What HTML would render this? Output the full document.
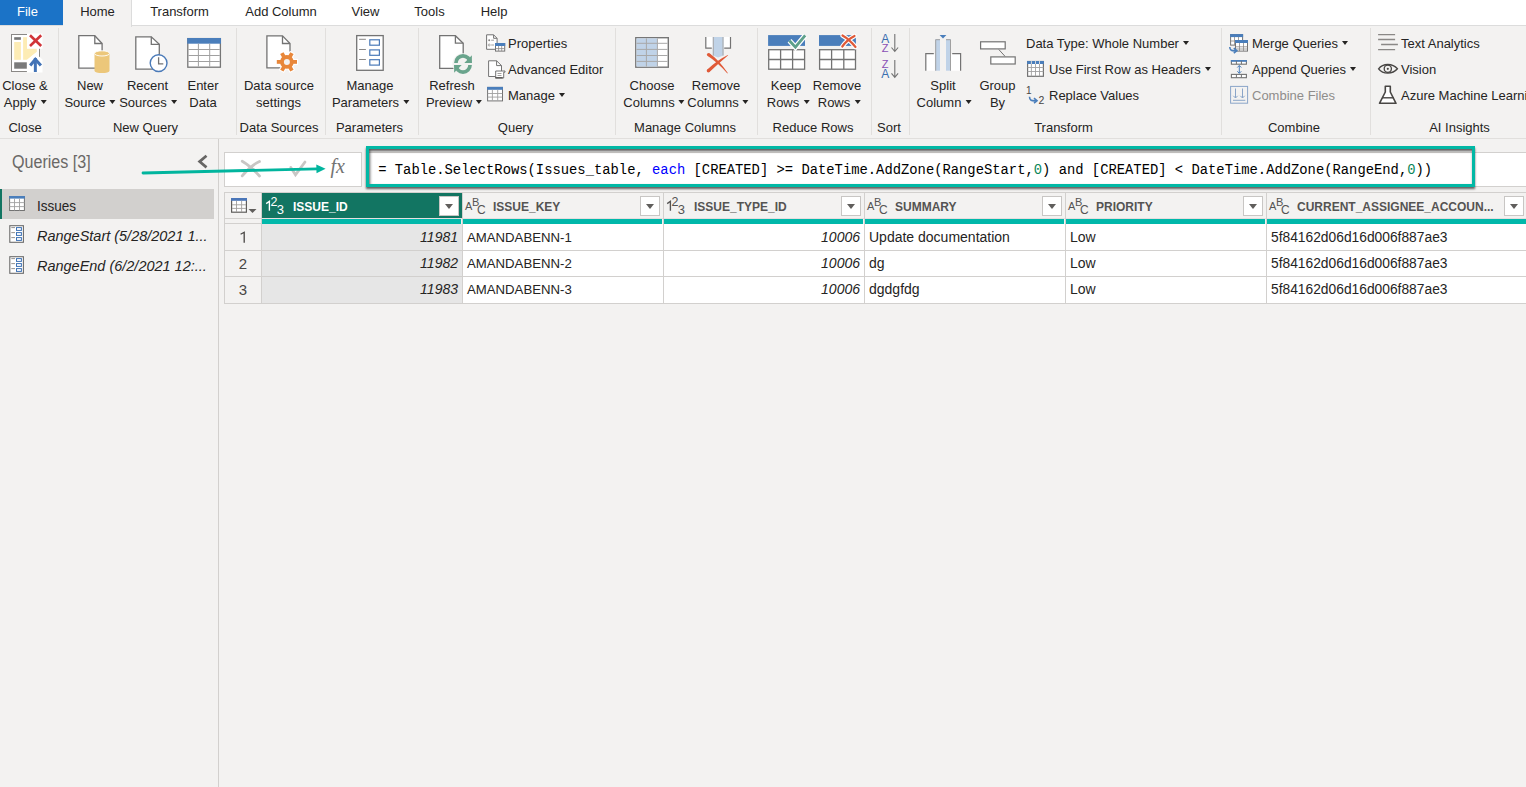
<!DOCTYPE html>
<html><head><meta charset="utf-8">
<style>
*{margin:0;padding:0;box-sizing:border-box}
html,body{width:1526px;height:787px;overflow:hidden;background:#f3f2f1;font-family:"Liberation Sans",sans-serif;color:#252423;position:relative}
.a{position:absolute}
.t{position:absolute;white-space:nowrap;font-size:13px;line-height:17px;color:#252423}
.c{transform:translateX(-50%)}
.dd{display:inline-block;width:0;height:0;border-left:3.5px solid transparent;border-right:3.5px solid transparent;border-top:4px solid #252423;vertical-align:middle;margin-left:4px;position:relative;top:-2px}
svg{position:absolute;overflow:visible}
</style></head><body>
<!-- tab bar -->
<div class="a" style="left:0;top:0;width:1526px;height:26px;background:#fff;border-bottom:1px solid #dcdcdc"></div>
<div class="a" style="left:0;top:0;width:63px;height:25px;background:#1b73c7"></div>
<div class="a" style="left:63px;top:0;width:69px;height:27px;background:#f3f2f1;border-right:1px solid #dcdcdc"></div>
<div class="t c" style="left:27.5px;top:3px;color:#fff">File</div>
<div class="t c" style="left:97.5px;top:3px">Home</div>
<div class="t c" style="left:179.5px;top:3px">Transform</div>
<div class="t c" style="left:281px;top:3px">Add Column</div>
<div class="t c" style="left:365.5px;top:3px">View</div>
<div class="t c" style="left:429.5px;top:3px">Tools</div>
<div class="t c" style="left:494px;top:3px">Help</div>

<!-- ribbon -->
<div class="a" style="left:0;top:138px;width:1526px;height:1px;background:#e1dfdd"></div>
<div class="a" style="left:58px;top:28px;width:1px;height:107px;background:#e1dfdd"></div>
<div class="a" style="left:236px;top:28px;width:1px;height:107px;background:#e1dfdd"></div>
<div class="a" style="left:325px;top:28px;width:1px;height:107px;background:#e1dfdd"></div>
<div class="a" style="left:418px;top:28px;width:1px;height:107px;background:#e1dfdd"></div>
<div class="a" style="left:615px;top:28px;width:1px;height:107px;background:#e1dfdd"></div>
<div class="a" style="left:757px;top:28px;width:1px;height:107px;background:#e1dfdd"></div>
<div class="a" style="left:871px;top:28px;width:1px;height:107px;background:#e1dfdd"></div>
<div class="a" style="left:909px;top:28px;width:1px;height:107px;background:#e1dfdd"></div>
<div class="a" style="left:1221px;top:28px;width:1px;height:107px;background:#e1dfdd"></div>
<div class="a" style="left:1370px;top:28px;width:1px;height:107px;background:#e1dfdd"></div>

<!-- group labels -->
<div class="t c" style="left:25px;top:119px">Close</div>
<div class="t c" style="left:145.5px;top:119px">New Query</div>
<div class="t c" style="left:279px;top:119px">Data Sources</div>
<div class="t c" style="left:369.5px;top:119px">Parameters</div>
<div class="t c" style="left:515.5px;top:119px">Query</div>
<div class="t c" style="left:685px;top:119px">Manage Columns</div>
<div class="t c" style="left:813px;top:119px">Reduce Rows</div>
<div class="t c" style="left:889px;top:119px">Sort</div>
<div class="t c" style="left:1063.5px;top:119px">Transform</div>
<div class="t c" style="left:1294px;top:119px">Combine</div>
<div class="t c" style="left:1459.5px;top:119px">AI Insights</div>

<!-- big button labels -->
<div class="t c" style="left:25px;top:77px">Close &amp;</div>
<div class="t c" style="left:25px;top:94px">Apply<span class="dd"></span></div>
<div class="t c" style="left:90px;top:77px">New</div>
<div class="t c" style="left:90px;top:94px">Source<span class="dd"></span></div>
<div class="t c" style="left:147.5px;top:77px">Recent</div>
<div class="t c" style="left:148px;top:94px">Sources<span class="dd"></span></div>
<div class="t c" style="left:203px;top:77px">Enter</div>
<div class="t c" style="left:203px;top:94px">Data</div>
<div class="t c" style="left:279px;top:77px">Data source</div>
<div class="t c" style="left:278.5px;top:94px">settings</div>
<div class="t c" style="left:370px;top:77px">Manage</div>
<div class="t c" style="left:370.5px;top:94px">Parameters<span class="dd"></span></div>
<div class="t c" style="left:452px;top:77px">Refresh</div>
<div class="t c" style="left:454px;top:94px">Preview<span class="dd"></span></div>
<div class="t c" style="left:652px;top:77px">Choose</div>
<div class="t c" style="left:654px;top:94px">Columns<span class="dd"></span></div>
<div class="t c" style="left:716px;top:77px">Remove</div>
<div class="t c" style="left:718px;top:94px">Columns<span class="dd"></span></div>
<div class="t c" style="left:786px;top:77px">Keep</div>
<div class="t c" style="left:788px;top:94px">Rows<span class="dd"></span></div>
<div class="t c" style="left:837px;top:77px">Remove</div>
<div class="t c" style="left:839px;top:94px">Rows<span class="dd"></span></div>
<div class="t c" style="left:943px;top:77px">Split</div>
<div class="t c" style="left:944px;top:94px">Column<span class="dd"></span></div>
<div class="t c" style="left:997.5px;top:77px">Group</div>
<div class="t c" style="left:997.5px;top:94px">By</div>

<!-- small button labels -->
<div class="t" style="left:508px;top:35px">Properties</div>
<div class="t" style="left:508px;top:61px">Advanced Editor</div>
<div class="t" style="left:508px;top:87px">Manage<span class="dd"></span></div>
<div class="t" style="left:1026px;top:35px">Data Type: Whole Number<span class="dd"></span></div>
<div class="t" style="left:1049px;top:61px">Use First Row as Headers<span class="dd"></span></div>
<div class="t" style="left:1049px;top:87px">Replace Values</div>
<div class="t" style="left:1252px;top:35px">Merge Queries<span class="dd"></span></div>
<div class="t" style="left:1252px;top:61px">Append Queries<span class="dd"></span></div>
<div class="t" style="left:1252px;top:87px;color:#8f8d8b">Combine Files</div>
<div class="t" style="left:1401px;top:35px">Text Analytics</div>
<div class="t" style="left:1401px;top:61px">Vision</div>
<div class="t" style="left:1401px;top:87px">Azure Machine Learning</div>

<!-- ICONS -->


<!-- left panel -->
<div class="a" style="left:218px;top:139px;width:1px;height:648px;background:#d2d0ce"></div>
<div class="t" style="left:12px;top:152px;font-size:17.5px;line-height:20px;color:#6a6866;transform:scaleX(0.92);transform-origin:0 0">Queries [3]</div>
<div class="a" style="left:0;top:189px;width:214px;height:30px;background:#d2d0ce"></div>
<div class="a" style="left:0;top:189px;width:2px;height:30px;background:#127562"></div>
<div class="t" style="left:37px;top:197px;font-size:15px;line-height:17px;transform:scaleX(0.9);transform-origin:0 0">Issues</div>
<div class="t" style="left:37px;top:226.5px;font-size:15px;line-height:17px;font-style:italic;transform:scaleX(0.965);transform-origin:0 0">RangeStart (5/28/2021 1...</div>
<div class="t" style="left:37px;top:256.5px;font-size:15px;line-height:17px;font-style:italic;transform:scaleX(0.965);transform-origin:0 0">RangeEnd (6/2/2021 12:...</div>

<!-- formula bar -->
<div class="a" style="left:224px;top:152px;width:138px;height:35px;background:#fff;border:1px solid #d2d0ce"></div>
<div class="a" style="left:366px;top:152px;width:1160px;height:35px;background:#fff;border-top:1px solid #d2d0ce;border-bottom:1px solid #d2d0ce"></div>
<div class="a" style="left:366px;top:146px;width:1109px;height:41px;border:3px solid #01b8a5;box-shadow:0 2px 2px rgba(0,0,0,.6), inset 1px 2px 3px rgba(0,0,0,.65)"></div>
<div class="t" style="left:378.2px;top:162px;font-family:'Liberation Mono',monospace;font-size:13.83px;line-height:17px;color:#000">= Table.SelectRows(Issues_table, <span style="color:#0000ff">each</span> [CREATED] &gt;= DateTime.AddZone(RangeStart,<span style="color:#098658">0</span>) and [CREATED] &lt; DateTime.AddZone(RangeEnd,<span style="color:#098658">0</span>))</div>

<!-- table -->
<div id="table">
<div class="a" style="left:224px;top:192px;width:1302px;height:111px;background:#fff"></div>
<div class="a" style="left:224px;top:192px;width:1302px;height:32px;background:#f3f2f1"></div>
<div class="a" style="left:224px;top:192px;width:38px;height:112px;background:#f3f2f1"></div>
<div class="a" style="left:262px;top:224px;width:200px;height:79px;background:#e6e6e6"></div>
<div class="a" style="left:224px;top:192px;width:1302px;height:1px;background:#d2d0ce"></div>
<div class="a" style="left:224px;top:218px;width:1302px;height:1px;background:#e6dfdf"></div>
<div class="a" style="left:224px;top:218px;width:38px;height:1px;background:#d2d0ce"></div>
<div class="a" style="left:224px;top:223px;width:38px;height:1px;background:#d2d0ce"></div>
<div class="a" style="left:262px;top:193px;width:200px;height:25px;background:#127562"></div>
<div class="a" style="left:262px;top:219px;width:199px;height:5px;background:#01b8aa"></div>
<div class="a" style="left:463px;top:219px;width:199px;height:5px;background:#01b8aa"></div>
<div class="a" style="left:664px;top:219px;width:199px;height:5px;background:#01b8aa"></div>
<div class="a" style="left:865px;top:219px;width:199px;height:5px;background:#01b8aa"></div>
<div class="a" style="left:1066px;top:219px;width:199px;height:5px;background:#01b8aa"></div>
<div class="a" style="left:1267px;top:219px;width:259px;height:5px;background:#01b8aa"></div>
<div class="a" style="left:224px;top:250px;width:1302px;height:1px;background:#d2d0ce"></div>
<div class="a" style="left:224px;top:276px;width:1302px;height:1px;background:#d2d0ce"></div>
<div class="a" style="left:224px;top:303px;width:1302px;height:1px;background:#d2d0ce"></div>
<div class="a" style="left:224px;top:192px;width:1px;height:112px;background:#d2d0ce"></div>
<div class="a" style="left:261px;top:192px;width:1px;height:112px;background:#d2d0ce"></div>
<div class="a" style="left:462px;top:192px;width:1px;height:112px;background:#d2d0ce"></div>
<div class="a" style="left:663px;top:192px;width:1px;height:112px;background:#d2d0ce"></div>
<div class="a" style="left:864px;top:192px;width:1px;height:112px;background:#d2d0ce"></div>
<div class="a" style="left:1065px;top:192px;width:1px;height:112px;background:#d2d0ce"></div>
<div class="a" style="left:1266px;top:192px;width:1px;height:112px;background:#d2d0ce"></div>
<div class="a" style="left:439px;top:196px;width:20px;height:20px;background:#fff;border:1px solid #c8c6c4"><div class="a" style="left:5px;top:7px;width:0;height:0;border-left:4.5px solid transparent;border-right:4.5px solid transparent;border-top:5px solid #605e5c"></div></div>
<div class="a" style="left:640px;top:196px;width:20px;height:20px;background:#fff;border:1px solid #c8c6c4"><div class="a" style="left:5px;top:7px;width:0;height:0;border-left:4.5px solid transparent;border-right:4.5px solid transparent;border-top:5px solid #605e5c"></div></div>
<div class="a" style="left:841px;top:196px;width:20px;height:20px;background:#fff;border:1px solid #c8c6c4"><div class="a" style="left:5px;top:7px;width:0;height:0;border-left:4.5px solid transparent;border-right:4.5px solid transparent;border-top:5px solid #605e5c"></div></div>
<div class="a" style="left:1042px;top:196px;width:20px;height:20px;background:#fff;border:1px solid #c8c6c4"><div class="a" style="left:5px;top:7px;width:0;height:0;border-left:4.5px solid transparent;border-right:4.5px solid transparent;border-top:5px solid #605e5c"></div></div>
<div class="a" style="left:1243px;top:196px;width:20px;height:20px;background:#fff;border:1px solid #c8c6c4"><div class="a" style="left:5px;top:7px;width:0;height:0;border-left:4.5px solid transparent;border-right:4.5px solid transparent;border-top:5px solid #605e5c"></div></div>
<div class="a" style="left:1504px;top:196px;width:20px;height:20px;background:#fff;border:1px solid #c8c6c4"><div class="a" style="left:5px;top:7px;width:0;height:0;border-left:4.5px solid transparent;border-right:4.5px solid transparent;border-top:5px solid #605e5c"></div></div>
<svg style="left:262px;top:194px" width="24" height="24" viewBox="0 0 24 24"><path d="M4.2 9.6L7.4 7.3V16.8" stroke="#fff" stroke-width="1.35" fill="none"/></svg>
<div class="a" style="left:262px;top:194px;width:24px;height:24px;color:#fff;font-size:0"><span class="a" style="left:8.6px;top:0.6px;font-size:12.5px;line-height:14px">2</span><span class="a" style="left:14.8px;top:7.5px;font-size:13px;line-height:15px">3</span></div>
<div class="t" style="left:293px;top:199px;font-size:12px;font-weight:bold;color:#fff">ISSUE_ID</div>
<div class="a" style="left:465px;top:196px;width:20px;height:20px;color:#555453;font-size:0"><span class="a" style="left:0;top:4px;font-size:11px;line-height:13px">A</span><span class="a" style="left:7px;top:0px;font-size:11px;line-height:13px">B</span><span class="a" style="left:12px;top:7px;font-size:12px;line-height:14px">C</span></div>
<div class="t" style="left:493px;top:199px;font-size:12px;font-weight:bold;color:#555453">ISSUE_KEY</div>
<svg style="left:663px;top:194px" width="24" height="24" viewBox="0 0 24 24"><path d="M4.2 9.6L7.4 7.3V16.8" stroke="#555453" stroke-width="1.35" fill="none"/></svg>
<div class="a" style="left:663px;top:194px;width:24px;height:24px;color:#555453;font-size:0"><span class="a" style="left:8.6px;top:0.6px;font-size:12.5px;line-height:14px">2</span><span class="a" style="left:14.8px;top:7.5px;font-size:13px;line-height:15px">3</span></div>
<div class="t" style="left:694px;top:199px;font-size:12px;font-weight:bold;color:#555453">ISSUE_TYPE_ID</div>
<div class="a" style="left:867px;top:196px;width:20px;height:20px;color:#555453;font-size:0"><span class="a" style="left:0;top:4px;font-size:11px;line-height:13px">A</span><span class="a" style="left:7px;top:0px;font-size:11px;line-height:13px">B</span><span class="a" style="left:12px;top:7px;font-size:12px;line-height:14px">C</span></div>
<div class="t" style="left:895px;top:199px;font-size:12px;font-weight:bold;color:#555453">SUMMARY</div>
<div class="a" style="left:1068px;top:196px;width:20px;height:20px;color:#555453;font-size:0"><span class="a" style="left:0;top:4px;font-size:11px;line-height:13px">A</span><span class="a" style="left:7px;top:0px;font-size:11px;line-height:13px">B</span><span class="a" style="left:12px;top:7px;font-size:12px;line-height:14px">C</span></div>
<div class="t" style="left:1096px;top:199px;font-size:12px;font-weight:bold;color:#555453">PRIORITY</div>
<div class="a" style="left:1269px;top:196px;width:20px;height:20px;color:#555453;font-size:0"><span class="a" style="left:0;top:4px;font-size:11px;line-height:13px">A</span><span class="a" style="left:7px;top:0px;font-size:11px;line-height:13px">B</span><span class="a" style="left:12px;top:7px;font-size:12px;line-height:14px">C</span></div>
<div class="t" style="left:1297px;top:199px;font-size:12px;font-weight:bold;color:#555453">CURRENT_ASSIGNEE_ACCOUN...</div>
<svg style="left:236px;top:228px" width="14" height="18" viewBox="0 0 14 18"><path d="M4.6 6.2L8.2 4.3V14.7" stroke="#484644" stroke-width="1.3" fill="none"/></svg>
<div class="t" style="right:1068px;top:229px;font-size:14px;font-style:italic">11981</div>
<div class="t" style="left:467px;top:229px;font-size:13.2px">AMANDABENN-1</div>
<div class="t" style="right:666px;top:229px;font-size:14px;font-style:italic">10006</div>
<div class="t" style="left:869px;top:229px;font-size:14px">Update documentation</div>
<div class="t" style="left:1070px;top:229px;font-size:14px">Low</div>
<div class="t" style="left:1271px;top:229px;font-size:13.8px">5f84162d06d16d006f887ae3</div>
<div class="t c" style="left:243px;top:255px;font-size:15px;line-height:18px;color:#484644">2</div>
<div class="t" style="right:1068px;top:255px;font-size:14px;font-style:italic">11982</div>
<div class="t" style="left:467px;top:255px;font-size:13.2px">AMANDABENN-2</div>
<div class="t" style="right:666px;top:255px;font-size:14px;font-style:italic">10006</div>
<div class="t" style="left:869px;top:255px;font-size:14px">dg</div>
<div class="t" style="left:1070px;top:255px;font-size:14px">Low</div>
<div class="t" style="left:1271px;top:255px;font-size:13.8px">5f84162d06d16d006f887ae3</div>
<div class="t c" style="left:243px;top:281px;font-size:15px;line-height:18px;color:#484644">3</div>
<div class="t" style="right:1068px;top:281px;font-size:14px;font-style:italic">11983</div>
<div class="t" style="left:467px;top:281px;font-size:13.2px">AMANDABENN-3</div>
<div class="t" style="right:666px;top:281px;font-size:14px;font-style:italic">10006</div>
<div class="t" style="left:869px;top:281px;font-size:14px">dgdgfdg</div>
<div class="t" style="left:1070px;top:281px;font-size:14px">Low</div>
<div class="t" style="left:1271px;top:281px;font-size:13.8px">5f84162d06d16d006f887ae3</div>
<svg style="left:231px;top:198px" width="26" height="15" viewBox="0 0 26 15">
<rect x="0.6" y="0.6" width="14.8" height="13.6" fill="#fff" stroke="#605e5c" stroke-width="1.2"/>
<rect x="0" y="0" width="16" height="2.8" fill="#4a76b8"/>
<path d="M5.5 2.8V14M10.6 2.8V14M1 6.8H15M1 10.4H15" stroke="#a19f9d" stroke-width="0.9" fill="none"/>
<path d="M17.5 11h8l-4 4z" fill="#605e5c"/></svg>
</div>
<!--endtable-->

<div id="icons"><svg style="left:0;top:0" width="1526" height="787" viewBox="0 0 1526 787">
<!-- Close & Apply -->
<g>
<rect x="11.5" y="34.5" width="28" height="37" fill="#fff" stroke="#8a8886" stroke-width="1"/>
<rect x="14.2" y="37.2" width="6.7" height="2.6" fill="#767676"/>
<rect x="14.2" y="42" width="6.7" height="17.8" fill="#fdecb5"/>
<path d="M23.1 37.2H36.8V51.8L26.9 59.8H23.1Z" fill="#fdecb5"/>
<rect x="14.2" y="62.3" width="12.7" height="6.4" fill="#7a7a7a"/>
<path d="M27 33.5H42.5V48.8H27Z" fill="#fff"/>
<path d="M26.9 60.5L35.35 53.2L42.5 59.5V72.5H26.9Z" fill="#fff"/>
<path d="M30 35.2L41.2 46M41.2 35.2L30 46" stroke="#d13438" stroke-width="2.6"/>

<path d="M35.35 58V72" stroke="#4373b6" stroke-width="3"/>
<path d="M30.2 65.5L35.35 59.2L40.9 65.5" stroke="#4373b6" stroke-width="3" fill="none"/>
</g>
<!-- New Source -->
<g stroke="#737373" stroke-width="1.3" fill="#fff">
<path d="M78.8 35.7H94.8L102.1 43.5V68.1H78.8Z"/>
<path d="M94.8 35.7V43.5H102.1" fill="none"/>
</g>
<g>
<path d="M94.5 53.4V70.8A7.5 2.3 0 0 0 109.5 70.8V53.4Z" fill="#ecc77a"/>
<ellipse cx="102" cy="53.4" rx="7.5" ry="2.6" fill="#ecc77a" stroke="#fff" stroke-width="0.9"/>
</g>
<!-- Recent Sources -->
<g stroke="#737373" stroke-width="1.3" fill="#fff">
<path d="M135.8 36.8H151.3L159.3 44.3V69.1H135.8Z"/>
<path d="M151.3 36.8V44.3H159.3" fill="none"/>
</g>
<circle cx="158.6" cy="63.1" r="8.4" fill="#fff" stroke="#4a7ab8" stroke-width="1.4"/>
<path d="M158.6 57.3V63.8H163.3" stroke="#737373" stroke-width="1.3" fill="none"/>
<!-- Enter Data -->
<rect x="187.8" y="38.6" width="32.6" height="28.6" fill="#fff" stroke="#767676" stroke-width="1.3"/>
<rect x="187.2" y="38" width="33.8" height="5.7" fill="#4a7ebb"/>
<path d="M198.4 43.7V66.6M209.7 43.7V66.6M188.4 49.5H219.8M188.4 55.5H219.8M188.4 61.5H219.8" stroke="#a0a0a0" stroke-width="1"/>
<!-- Data source settings -->
<g stroke="#737373" stroke-width="1.3" fill="#fff">
<path d="M266.9 35.9H282.5L290 43.5V67.8H266.9Z"/>
<path d="M282.5 35.9V43.5H290" fill="none"/>
</g>
<g transform="translate(286.9 61.9)">
<g fill="#fff" stroke="#fff" stroke-width="2.2"><circle r="6.8"/><rect x="4.5" y="-1.9" width="5.6" height="3.8"/><rect x="4.5" y="-1.9" width="5.6" height="3.8" transform="rotate(60)"/><rect x="4.5" y="-1.9" width="5.6" height="3.8" transform="rotate(120)"/><rect x="4.5" y="-1.9" width="5.6" height="3.8" transform="rotate(180)"/><rect x="4.5" y="-1.9" width="5.6" height="3.8" transform="rotate(240)"/><rect x="4.5" y="-1.9" width="5.6" height="3.8" transform="rotate(300)"/></g>
<g fill="#e8873a"><circle r="6.8"/><rect x="4.5" y="-1.9" width="5.6" height="3.8"/><rect x="4.5" y="-1.9" width="5.6" height="3.8" transform="rotate(60)"/><rect x="4.5" y="-1.9" width="5.6" height="3.8" transform="rotate(120)"/><rect x="4.5" y="-1.9" width="5.6" height="3.8" transform="rotate(180)"/><rect x="4.5" y="-1.9" width="5.6" height="3.8" transform="rotate(240)"/><rect x="4.5" y="-1.9" width="5.6" height="3.8" transform="rotate(300)"/></g>
<circle r="3" fill="#f3f2f1"/>
</g>
<!-- Manage Parameters -->
<rect x="356.7" y="35.6" width="26.5" height="34.7" fill="#fff" stroke="#737373" stroke-width="1.3"/>
<path d="M359.1 39.3H365.9M359.1 49.5H365.9M359.1 59.5H365.9" stroke="#8a8886" stroke-width="1"/>
<rect x="369.8" y="39.8" width="9.6" height="5.4" fill="none" stroke="#4a7ab8" stroke-width="1.2"/>
<rect x="369.8" y="49.9" width="9.6" height="5.4" fill="none" stroke="#4a7ab8" stroke-width="1.2"/>
<rect x="369.8" y="59.7" width="9.6" height="5.4" fill="none" stroke="#4a7ab8" stroke-width="1.2"/>
<!-- Refresh Preview -->
<g stroke="#737373" stroke-width="1.3" fill="#fff">
<path d="M439.7 35.7H455.4L463.2 43.2V68.3H439.7Z"/>
<path d="M455.4 35.7V43.2H463.2" fill="none"/>
</g>
<circle cx="463" cy="63.9" r="10.6" fill="#f3f2f1"/>
<path d="M454.1 62.9A8.9 8.9 0 0 1 471.9 62.9H468.2A5.2 5.2 0 0 0 457.8 62.9Z" fill="#69a48c"/>
<path d="M471.9 65A8.9 8.9 0 0 1 454.1 65H457.8A5.2 5.2 0 0 0 468.2 65Z" fill="#69a48c"/>
<path d="M464.3 62.9H471.9V55.2Z" fill="#69a48c"/>
<path d="M461.7 65H454.1V72.7Z" fill="#69a48c"/>
<!-- Properties -->
<g stroke="#737373" stroke-width="1" fill="#fff">
<path d="M486.6 34.8H493.6L497.1 38.3V49.3H486.6Z"/><path d="M493.6 34.8V38.3H497.1" fill="none"/>
</g>
<circle cx="489.2" cy="40.2" r="1" fill="#8a8886"/><path d="M491.2 40.2H494" stroke="#8a8886" stroke-width="0.8"/>
<circle cx="489.2" cy="45" r="1" fill="none" stroke="#8a8886" stroke-width="0.7"/><path d="M491.2 45H494" stroke="#8a8886" stroke-width="0.8"/>
<rect x="495.5" y="43.5" width="9.2" height="7.6" fill="#fff" stroke="#737373" stroke-width="1"/>
<rect x="495" y="43" width="10.2" height="3" fill="#4a7ebb"/>
<path d="M498.6 46V51M501.7 46V51M495.5 48.6H504.7" stroke="#8a8886" stroke-width="0.8"/>
<!-- Advanced Editor -->
<g stroke="#737373" stroke-width="1" fill="#fff">
<path d="M488.6 60.8H496.6L501.5 65.6V76.5H488.6Z"/><path d="M496.6 60.8V65.6H501.5" fill="none"/>
</g>
<path d="M495.7 71H505V72.2H503.7V78H495.7Z" fill="#fff" stroke="#737373" stroke-width="1"/>
<path d="M497.5 73.5H501.5M497.5 75.5H501.5" stroke="#8a8886" stroke-width="0.8"/>
<rect x="495.2" y="77" width="7.5" height="1.5" fill="#605e5c"/>
<!-- Manage table -->
<rect x="487.6" y="87.4" width="14.9" height="13.5" fill="#fff" stroke="#737373" stroke-width="1"/>
<rect x="487.1" y="86.9" width="15.9" height="2.9" fill="#4a7ebb"/>
<path d="M492.4 89.8V100.6M497.7 89.8V100.6M487.8 93.5H502.3M487.8 97.1H502.3" stroke="#a0a0a0" stroke-width="0.9"/>
<!-- Choose Columns -->
<rect x="635.8" y="37.7" width="32.5" height="29.5" fill="#fff" stroke="#767676" stroke-width="1.4"/>
<rect x="636.5" y="38.4" width="20.9" height="28.1" fill="#c0d3e8"/>
<path d="M646.4 38.4V66.5M657.4 38.4V66.5M636.5 43.3H667.6M636.5 49.4H667.6M636.5 55.5H667.6M636.5 61.4H667.6" stroke="#a8a8a8" stroke-width="1"/>
<!-- Remove Columns -->
<rect x="705.8" y="37" width="25" height="11.1" fill="#fff"/>
<path d="M705.8 37V48.1H711.8M724.2 48.1H730.5V37" fill="none" stroke="#737373" stroke-width="1.2"/>
<path d="M712.8 37V55.4L718.1 57.5L723.5 55.4V37Z" fill="#c0d3e8"/>
<path d="M713.3 37V55.5M723 37V55.5" stroke="#a8a8a8" stroke-width="1"/>
<g fill="#e05a38">
<path d="M707.4 55.8Q716.5 61.5 727.4 73.4L727.8 73Q719 60 709.8 53.4Z"/><circle cx="708.6" cy="54.6" r="1.7"/>
<path d="M727.8 54.9Q716.5 60.5 707.3 69.5L709.5 72.1Q718.5 63.5 728.2 55.3Z"/><circle cx="708.4" cy="70.8" r="1.7"/>
</g>
<!-- Keep Rows -->
<rect x="768.1" y="35.1" width="36.9" height="10.8" fill="#4a7ebb"/>
<rect x="768.7" y="49.7" width="35.9" height="19.5" fill="#fff" stroke="#737373" stroke-width="1.3"/>
<path d="M780.6 49.7V69.2M792.6 49.7V69.2M768.7 59.5H804.6" stroke="#737373" stroke-width="1.3"/>
<path d="M789.5 40.8L795.4 47.2L805.2 35.3" stroke="#fff" stroke-width="5.2" fill="none"/>
<path d="M789.5 40.8L795.4 47.2L805.2 35.3" stroke="#5ea08a" stroke-width="2.8" fill="none"/>
<!-- Remove Rows -->
<rect x="819" y="35.1" width="36.9" height="10.8" fill="#4a7ebb"/>
<rect x="819.6" y="49.7" width="35.9" height="19.5" fill="#fff" stroke="#737373" stroke-width="1.3"/>
<path d="M831.6 49.7V69.2M843.8 49.7V69.2M819.6 59.5H855.5" stroke="#737373" stroke-width="1.3"/>
<path d="M842.5 35.5C847 38 851 41.5 855.5 47M854.5 36C849.5 38.5 845.5 42 842.3 46.5" stroke="#fff" stroke-width="4.5" fill="none" stroke-linecap="round"/>
<path d="M842.5 35.5C847 38 851 41.5 855.5 47M854.5 36C849.5 38.5 845.5 42 842.3 46.5" stroke="#e05a38" stroke-width="2.2" fill="none" stroke-linecap="round"/>
<!-- Sort -->
<g font-family="Liberation Sans" font-size="11.5">
<text x="881.3" y="42.8" fill="#3a6fb0" font-size="12">A</text>
<text x="881.8" y="52.2" fill="#8a4fb5" font-size="11">Z</text>
<text x="881.8" y="67.9" fill="#8a4fb5" font-size="11">Z</text>
<text x="881.3" y="77.8" fill="#3a6fb0" font-size="12">A</text>
</g>
<path d="M894.8 34.1V51.5M891.5 47.5L894.8 51.5L898.1 47.5M894.8 60V77.3M891.5 73.3L894.8 77.3L898.1 73.3" stroke="#737373" stroke-width="1.1" fill="none"/>
<!-- Split Column -->
<rect x="926.2" y="54" width="8.6" height="16.7" fill="#fff"/>
<rect x="951" y="54" width="9.2" height="16.7" fill="#fff"/>
<path d="M925.8 70.7V53.7H933.8M952.2 53.7H960.6V70.7" stroke="#737373" stroke-width="1.2" fill="none"/>
<rect x="935.2" y="39.2" width="4.8" height="31.5" fill="#c0d3e8"/>
<rect x="946" y="39.2" width="5" height="31.5" fill="#c0d3e8"/>
<path d="M935.7 70.7V39.7H940M946 39.7H950.5V70.7" stroke="#a0a0a0" stroke-width="1" fill="none"/>
<path d="M939.6 35H946.4L943 38.4Z" fill="#4a7ebb"/>
<!-- Group By -->
<rect x="980.6" y="41.8" width="24.6" height="7.1" fill="#fff" stroke="#737373" stroke-width="1.2"/>
<rect x="990.8" y="56.9" width="24.4" height="7.1" fill="#fff" stroke="#737373" stroke-width="1.2"/>
<path d="M998.8 49.5L1005 56.3" stroke="#737373" stroke-width="1"/>
<!-- Use First Row -->
<rect x="1027.6" y="61.5" width="15.8" height="14.8" fill="#fff" stroke="#737373" stroke-width="1.2"/>
<rect x="1027.1" y="61" width="16.8" height="3" fill="#4a7ebb"/>
<path d="M1031.4 61.5V76.3M1035.5 61.5V76.3M1039.5 61.5V76.3M1027.6 67.5H1043.4M1027.6 71.5H1043.4" stroke="#a0a0a0" stroke-width="0.9"/>
<path d="M1031.4 61V64M1035.5 61V64M1039.5 61V64" stroke="#fff" stroke-width="0.6"/>
<!-- Replace Values -->
<text x="1026" y="93.7" font-family="Liberation Sans" font-size="10" fill="#484644">1</text>
<text x="1038.6" y="103.5" font-family="Liberation Sans" font-size="10.5" fill="#484644">2</text>
<path d="M1029.5 96.8C1029.5 100.5 1031.5 101 1036 100.8" stroke="#4a7ebb" stroke-width="1.6" fill="none"/>
<path d="M1034 98.2L1037 100.8L1034 103.2" stroke="#4a7ebb" stroke-width="1.6" fill="none"/>
<!-- Merge Queries -->
<rect x="1230.6" y="34.6" width="12" height="10.5" fill="#fff" stroke="#737373" stroke-width="1"/>
<rect x="1230.1" y="34.1" width="13" height="3" fill="#4a7ebb"/>
<path d="M1234.5 37V45M1238.5 37V45M1230.6 41H1242.6" stroke="#8a8886" stroke-width="0.8"/>
<rect x="1235.5" y="40.5" width="12" height="10.6" fill="#fff" stroke="#737373" stroke-width="1"/>
<rect x="1235" y="40" width="13" height="3" fill="#4a7ebb"/>
<path d="M1239.5 43V51M1243.5 43V51M1235.5 46.8H1247.5M1235.5 49H1247.5" stroke="#8a8886" stroke-width="0.8"/>
<path d="M1229.8 47C1229.8 50.5 1231.5 51 1236 50.8" stroke="#4a7ebb" stroke-width="1.6" fill="none"/>
<path d="M1233.8 48.2L1236.8 50.8L1233.8 53.2" stroke="#4a7ebb" stroke-width="1.6" fill="none"/>
<!-- Append Queries -->
<rect x="1231.4" y="60.6" width="15" height="3.6" fill="#fff" stroke="#737373" stroke-width="1.1"/>
<rect x="1230.9" y="60" width="16" height="1.8" fill="#4a7ebb"/>
<path d="M1236.4 61V64.2M1241.4 61V64.2" stroke="#737373" stroke-width="1"/>
<rect x="1231.4" y="74.4" width="15" height="3.3" fill="#fff" stroke="#737373" stroke-width="1.1"/>
<path d="M1236.4 74.4V77.7M1241.4 74.4V77.7" stroke="#737373" stroke-width="1"/>
<path d="M1239.3 65.5V73.3M1237.3 67.5L1239.3 65.5L1241.3 67.5M1237.3 71.3L1239.3 73.3L1241.3 71.3" stroke="#4a7ebb" stroke-width="1" fill="none"/>
<!-- Combine Files -->
<rect x="1230.6" y="86.4" width="17" height="16.8" fill="none" stroke="#8aa5c8" stroke-width="1"/>
<path d="M1235.5 88.5V98M1233.3 95.8L1235.5 98L1237.7 95.8M1242.5 88.5V98M1240.3 95.8L1242.5 98L1244.7 95.8M1233 100.3H1245.3" stroke="#8aa5c8" stroke-width="1" fill="none"/>
<!-- Text Analytics -->
<path d="M1378.1 34.6H1395.1M1378.1 39.5H1395.1M1381.1 44.5H1397.9M1378.1 49.6H1395.1" stroke="#8a8886" stroke-width="1.4"/>
<!-- Vision -->
<path d="M1378.6 68.8C1383 63 1392.5 63 1397.4 68.8C1392.5 74.6 1383 74.6 1378.6 68.8Z" fill="none" stroke="#484644" stroke-width="1.4"/>
<circle cx="1387.8" cy="68.8" r="3.6" fill="none" stroke="#484644" stroke-width="1.3"/>
<circle cx="1387.8" cy="68.8" r="1.1" fill="#484644"/>
<!-- Flask -->
<path d="M1385.3 86.2H1390.3V92L1396 103.3H1379.5L1385.3 92Z" fill="#fff" stroke="#484644" stroke-width="1.6" stroke-linejoin="round"/>
<path d="M1382 97.8H1393.8" stroke="#484644" stroke-width="1.4"/>

<!-- left panel icons -->
<rect x="9.6" y="196.5" width="14.8" height="14" fill="#fff" stroke="#737373" stroke-width="1"/>
<rect x="9.1" y="196" width="15.8" height="2.6" fill="#4a7ebb"/>
<path d="M14.5 198.6V210.5M19.5 198.6V210.5M9.6 202.6H24.4M9.6 206.6H24.4" stroke="#a0a0a0" stroke-width="0.9"/>
<g>
<rect x="9.8" y="225.7" width="13.6" height="16.6" fill="#fff" stroke="#6b6b6b" stroke-width="1.1"/>
<path d="M11.3 227.6H15M11.3 232.6H15M11.3 237.6H15" stroke="#8a8886" stroke-width="0.9"/>
<rect x="16.5" y="227.6" width="4.9" height="2.8" fill="none" stroke="#3d72b5" stroke-width="1"/>
<rect x="16.5" y="232.6" width="4.9" height="2.8" fill="none" stroke="#3d72b5" stroke-width="1"/>
<rect x="16.5" y="237.6" width="4.9" height="2.8" fill="none" stroke="#3d72b5" stroke-width="1"/>
</g>
<g transform="translate(0 31)">
<rect x="9.8" y="225.7" width="13.6" height="16.6" fill="#fff" stroke="#6b6b6b" stroke-width="1.1"/>
<path d="M11.3 227.6H15M11.3 232.6H15M11.3 237.6H15" stroke="#8a8886" stroke-width="0.9"/>
<rect x="16.5" y="227.6" width="4.9" height="2.8" fill="none" stroke="#3d72b5" stroke-width="1"/>
<rect x="16.5" y="232.6" width="4.9" height="2.8" fill="none" stroke="#3d72b5" stroke-width="1"/>
<rect x="16.5" y="237.6" width="4.9" height="2.8" fill="none" stroke="#3d72b5" stroke-width="1"/>
</g>
<!-- chevron -->
<path d="M206.5 155.8L199.6 161.6L206.5 167.4" stroke="#666564" stroke-width="2.7" fill="none"/>
<!-- X / check / fx -->
<path d="M242.2 161.2C248 164.5 254 170 259.5 176M259.5 161.5C253 164.5 247 170 242.2 175.8" stroke="#c8c6c4" stroke-width="2.8" fill="none" stroke-linecap="round"/>
<path d="M290.8 167.5L295.5 174.8L305 162" stroke="#c8c6c4" stroke-width="2.8" fill="none" stroke-linecap="round"/>
<text x="330.5" y="173" font-family="Liberation Serif" font-style="italic" font-size="20" fill="#737373">fx</text>
<!-- teal arrow -->
<path d="M143 173L317 168.8" stroke="#01b59e" stroke-width="2.8" stroke-linecap="round"/>
<path d="M316.3 164.6L325.6 168.7L316.5 173.3Z" fill="#01b59e"/>
</svg>
</div><!--endicons-->
</body></html>
